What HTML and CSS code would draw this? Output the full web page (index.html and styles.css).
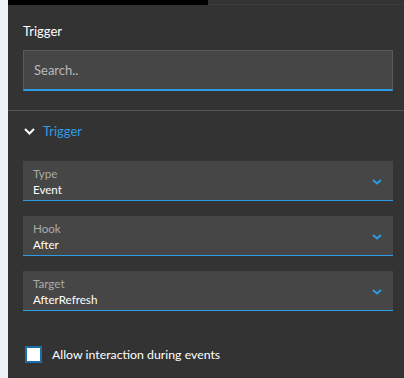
FILE: index.html
```html
<!DOCTYPE html>
<html lang="en">
<head>
    <meta charset="UTF-8">
    <meta name="viewport" content="width=device-width, initial-scale=1.0">
    <title>Trigger</title>
    <link rel="stylesheet" href="styles.css">
</head>
<body>

<div class="panel">
    <div class="topbar">
        <div class="topbar-fill"></div>
        <div class="topbar-rest"></div>
    </div>

    <div class="section">
        <h2 class="title">Trigger</h2>
        <input type="text" class="search" placeholder="Search..">
    </div>

    <div class="group">
        <div class="group-head">
            <svg class="caret" width="11" height="7" viewBox="0 0 11 7">
                <path d="M1 1 L5.5 5.5 L10 1" fill="none" stroke="#ffffff" stroke-width="2"/>
            </svg>
            <span class="group-title">Trigger</span>
        </div>

        <div class="select">
            <div class="select-text">
                <span class="select-label">Type</span>
                <span class="select-value">Event</span>
            </div>
            <svg class="arrow" width="10" height="6" viewBox="0 0 10 6">
                <path d="M1 1 L5 4.5 L9 1" fill="none" stroke="#2d9de3" stroke-width="2"/>
            </svg>
        </div>

        <div class="select">
            <div class="select-text">
                <span class="select-label">Hook</span>
                <span class="select-value">After</span>
            </div>
            <svg class="arrow" width="10" height="6" viewBox="0 0 10 6">
                <path d="M1 1 L5 4.5 L9 1" fill="none" stroke="#2d9de3" stroke-width="2"/>
            </svg>
        </div>

        <div class="select">
            <div class="select-text">
                <span class="select-label">Target</span>
                <span class="select-value">AfterRefresh</span>
            </div>
            <svg class="arrow" width="10" height="6" viewBox="0 0 10 6">
                <path d="M1 1 L5 4.5 L9 1" fill="none" stroke="#2d9de3" stroke-width="2"/>
            </svg>
        </div>

        <label class="check">
            <span class="box"></span>
            Allow interaction during events
        </label>
    </div>
</div>

</body>
</html>
```

FILE: styles.css
```css
body {
    margin: 0;
    background-color: #eef1f5;
    font-family: "Source Sans Pro", "Lato", "Liberation Sans", sans-serif;
    height: 378px;
    overflow: hidden;
}
.panel {
    margin-left: 8px;
    height: 378px;
    background-color: #333333;
}
.topbar {
    display: flex;
    height: 5px;
}
.topbar-fill {
    width: 200px;
    background-color: #000000;
}
.topbar-rest {
    flex: 1;
    border-bottom: 1px dotted #444444;
    height: 4px;
}
.section {
    padding: 16px 11px 0 15px;
    border-bottom: 1px solid #555555;
    height: 89px;
}
.title {
    margin: 0;
    font-size: 13px;
    font-weight: normal;
    color: #ffffff;
    line-height: 20px;
}
.search {
    display: block;
    box-sizing: border-box;
    width: 100%;
    height: 41px;
    margin-top: 9px;
    padding: 0 10px;
    background-color: #464646;
    border: 1px solid #5a5a5a;
    border-bottom: 2px solid #2d9de3;
    font-family: inherit;
    font-size: 13px;
    color: #ffffff;
    outline: none;
}
.search::placeholder {
    color: #b9b9b9;
}
.group {
    padding: 0 11px 0 15px;
}
.group-head {
    display: flex;
    align-items: center;
    gap: 8px;
    height: 20px;
    margin-top: 10px;
    padding-left: 1px;
}
.caret {
    display: block;
    margin-top: 1px;
}
.group-title {
    font-size: 13px;
    color: #2d9de3;
}
.select {
    display: flex;
    align-items: center;
    justify-content: space-between;
    box-sizing: border-box;
    height: 40px;
    margin-top: 15px;
    padding: 0 11px 0 10px;
    background-color: #464646;
    border-bottom: 1px solid #2d9de3;
}
.group-head + .select {
    margin-top: 20px;
}
.select-text {
    display: flex;
    flex-direction: column;
    font-size: 11.6px;
    line-height: 16px;
    padding-top: 2px;
}
.select-label {
    color: #aaaaaa;
}
.select-value {
    color: #ffffff;
}
.arrow {
    display: block;
    margin-top: 3px;
}
.check {
    display: flex;
    align-items: center;
    gap: 10px;
    margin-top: 35px;
    padding-left: 2px;
    font-size: 12.3px;
    color: #ffffff;
}
.box {
    box-sizing: border-box;
    width: 17px;
    height: 17px;
    background-color: #ffffff;
    border: 2px solid #1a6fa6;
}
```
